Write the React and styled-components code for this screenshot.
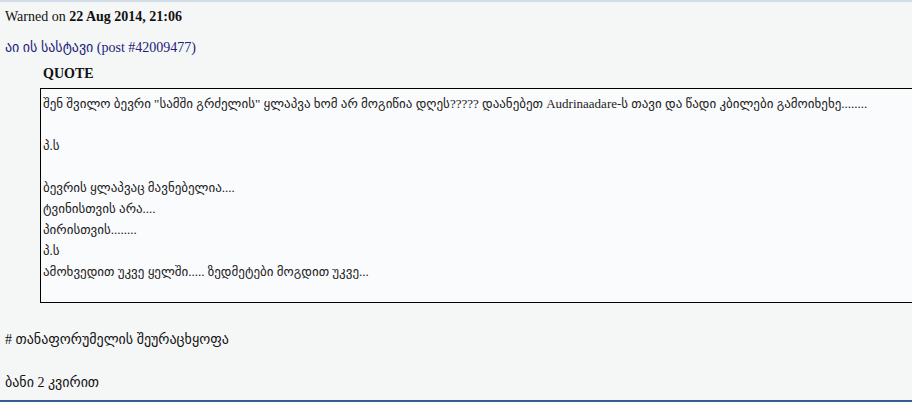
import styled, { createGlobalStyle } from "styled-components";

const GlobalStyle = createGlobalStyle`
  body {
    margin: 0;
    background: #ffffff;
    font-family: "Liberation Serif", "DejaVu Sans", serif;
  }
`;

const Panel = styled.div`
  background: #f5f6f6;
  border-top: 2px solid #d3dde9;
  border-bottom: 2px solid #365c92;
  height: 402px;
  box-sizing: border-box;
  padding: 6px 0 0 5px;
  font-size: 14px;
  color: #111;
  overflow: hidden;
`;

const Line = styled.div`
  line-height: 18px;
  margin-top: ${(p) => p.$top || 0}px;
  color: ${(p) => p.$color || "#111"};
`;

const Quote = styled.div`
  margin-left: 35px;
  margin-top: 8px;
`;

const QuoteTitle = styled.div`
  font-weight: bold;
  padding-left: 3px;
  line-height: 18px;
  margin-bottom: 5px;
`;

const QuoteBox = styled.div`
  border: 1px solid #000;
  border-right: none;
  background: #fafbfd;
  margin-right: -20px;
  height: 215px;
  box-sizing: border-box;
  padding: 4px 0 0 2px;
  font-size: 13px;
  line-height: 21px;
  color: #222;
`;

const quoteLines = [
  'შენ შვილო ბევრი "სამში გრძელის" ყლაპვა ხომ არ მოგიწია დღეს????? დაანებეთ Audrinaadare-ს თავი და წადი კბილები გამოიხეხე........',
  "",
  "პ.ს",
  "",
  "ბევრის ყლაპვაც მავნებელია....",
  "ტვინისთვის არა....",
  "პირისთვის........",
  "პ.ს",
  "ამოხვედით უკვე ყელში..... ზედმეტები მოგდით უკვე...",
];

export default function App() {
  return (
    <>
      <GlobalStyle />
      <Panel>
        <Line>
          Warned on <b>22 Aug 2014, 21:06</b>
        </Line>
        <Line $top={13} $color="#1b237a">
          აი ის სასტავი (post #42009477)
        </Line>
        <Quote>
          <QuoteTitle>QUOTE</QuoteTitle>
          <QuoteBox>
            {quoteLines.map((t, i) => (
              <div key={i}>{t || "\u00a0"}</div>
            ))}
          </QuoteBox>
        </Quote>
        <Line $top={28}># თანაფორუმელის შეურაცხყოფა</Line>
        <Line $top={25}>ბანი 2 კვირით</Line>
      </Panel>
    </>
  );
}
